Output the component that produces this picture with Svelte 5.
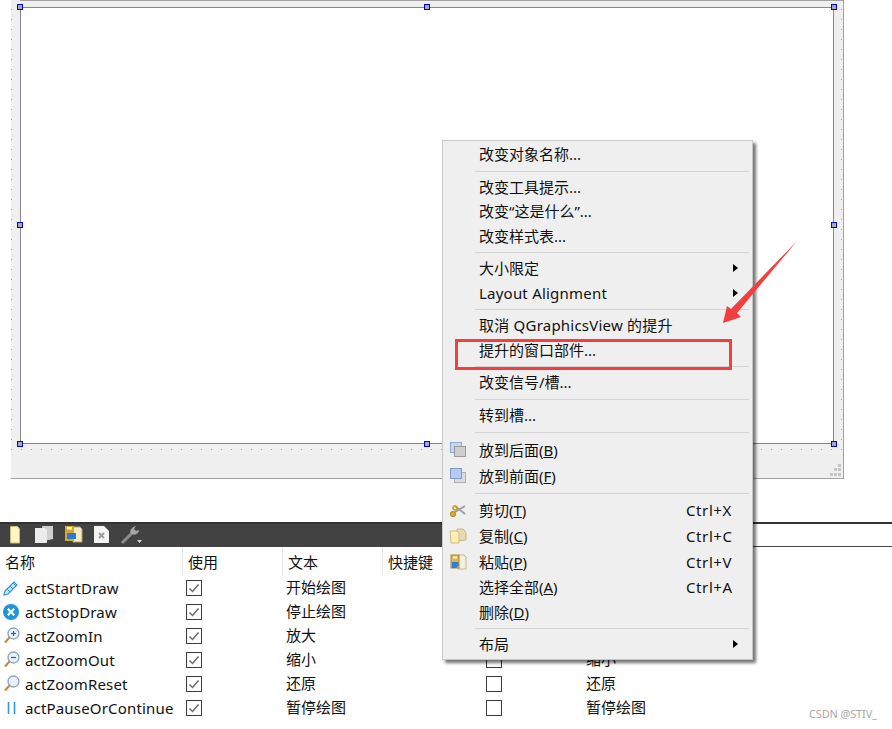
<script>
  // context menu rows: sep = divider, tall = row with an icon
  const menu = [
    { label: '改变对象名称...' },
    { sep: true },
    { label: '改变工具提示...' },
    { label: '改变“这是什么”...' },
    { label: '改变样式表...' },
    { sep: true },
    { label: '大小限定', sub: true },
    { label: 'Layout Alignment', sub: true, latin: true },
    { sep: true },
    { label: '取消 QGraphicsView 的提升', latin: true },
    { label: '提升的窗口部件...' },
    { sep: true },
    { label: '改变信号/槽...' },
    { sep: true },
    { label: '转到槽...' },
    { sep: true, wide: true },
    { label: '放到后面(', key: 'B', icon: 'back' },
    { label: '放到前面(', key: 'F', icon: 'front' },
    { sep: true },
    { label: '剪切(', key: 'T', icon: 'cut', shortcut: 'Ctrl+X' },
    { label: '复制(', key: 'C', icon: 'copy', shortcut: 'Ctrl+C' },
    { label: '粘贴(', key: 'P', icon: 'paste', shortcut: 'Ctrl+V' },
    { label: '选择全部(', key: 'A', shortcut: 'Ctrl+A' },
    { label: '删除(', key: 'D' },
    { sep: true },
    { label: '布局', sub: true }
  ];

  const actions = [
    { name: 'actStartDraw', text: '开始绘图', icon: 'pencil' },
    { name: 'actStopDraw', text: '停止绘图', icon: 'stop' },
    { name: 'actZoomIn', text: '放大', icon: 'zoomin' },
    { name: 'actZoomOut', text: '缩小', icon: 'zoomout' },
    { name: 'actZoomReset', text: '还原', icon: 'zoom' },
    { name: 'actPauseOrContinue', text: '暂停绘图', icon: 'pause' }
  ];

  const handles = [
    [20, 7], [427, 7], [834, 7],
    [20, 225], [834, 225],
    [20, 444], [427, 444], [834, 444]
  ];
</script>

{#snippet glyph(kind)}
  <svg class="glyph" viewBox="0 0 18 18" width="18" height="18" aria-hidden="true">
    {#if kind === 'pencil'}
      <path d="M3 12 12 3l3 3-9 9-4 1z" fill="#cfe6f8" stroke="#2f97dd" stroke-width="1.2" />
      <path d="M5 10l3 3M8 7l3 3M11 4l3 3" stroke="#2f97dd" />
    {:else if kind === 'stop'}
      <circle cx="9" cy="9" r="8" fill="#1f95dc" />
      <path d="M5.8 5.8l6.4 6.4M12.2 5.8l-6.4 6.4" stroke="#fff" stroke-width="2.2" />
    {:else if kind === 'zoomin' || kind === 'zoomout' || kind === 'zoom'}
      <circle cx="11.500" cy="6.500" r="5.500" fill="#e9f2fb" stroke="#8aa2bd" stroke-width="1.3" />
      <path d="M7.500 10.500l-4.500 5" stroke="#c88f3f" stroke-width="2.4" />
      {#if kind !== 'zoom'}
        <path d="M9 6.500h5" stroke="#2d5fa8" stroke-width="1.2" />
      {/if}
      {#if kind === 'zoomin'}
        <path d="M11.500 4v5" stroke="#2d5fa8" stroke-width="1.2" />
      {/if}
    {:else if kind === 'pause'}
      <path d="M6.500 3v12M12.500 3v12" stroke="#2f97dd" stroke-width="1.6" />
    {:else if kind === 'back'}
      <rect x="1.500" y="1.500" width="11" height="10" fill="#c4d6f2" stroke="#8fa8d0" />
      <rect x="5.500" y="5.500" width="11" height="10" fill="#cfcfcf" stroke="#9a9a9a" />
    {:else if kind === 'front'}
      <rect x="5.500" y="5.500" width="11" height="10" fill="#dcdcdc" stroke="#b0b0b0" />
      <rect x="1.500" y="1.500" width="11" height="10" fill="#b4cbf2" stroke="#7f9bc9" />
    {:else if kind === 'cut'}
      <path d="M6 11 16 5M6 5l10 8" stroke="#9c9c9c" stroke-width="1.8" />
      <circle cx="4" cy="13" r="2.4" fill="#d9b43c" stroke="#b8922a" stroke-width="1.4" />
      <circle cx="6" cy="7" r="2" fill="none" stroke="#c9a02c" stroke-width="1.6" />
    {:else if kind === 'copy'}
      <path d="M8 2h6l3 3v8l-9 1z" fill="#e6d9b0" stroke="#c4b68c" />
      <path d="M1 4h7l2 2v10H2z" fill="#fbf0b4" stroke="#d0bd82" />
    {:else if kind === 'paste'}
      <path d="M9 2h6l2 2v12H9z" fill="#f5f0de" stroke="#c4b68c" />
      <rect x="2" y="2" width="8" height="13" fill="#d9b84e" stroke="#a08a3c" />
      <rect x="4" y="3.500" width="4" height="2" fill="#fff6c8" />
      <path d="M3 9h6l1 3-3 3H3z" fill="#2f7fd6" />
    {/if}
  </svg>
{/snippet}

<div class="page">
  <section class="designer">
    <div class="canvas">
      <div class="widget"></div>
    </div>
    {#each handles as [x, y]}
      <span class="handle" style="left: {x - 11 - 3}px; top: {y - 3}px"></span>
    {/each}
    <svg class="grip" viewBox="0 0 14 14" width="14" height="14" aria-hidden="true">
      <path d="M9 0h3v3H9zM5 4h3v3H5zM9 4h3v3H9zM1 9h3v3H1zM5 9h3v3H5zM9 9h3v3H9z" fill="#c6c6c6" />
    </svg>
  </section>

  <div class="toolbar">
    <div class="tools">
      <svg viewBox="0 0 150 24" width="150" height="24" aria-hidden="true">
        <path d="M10.500 4.500h7l2 2.500v14h-9z" fill="#fdf6c0" stroke="#c9bc7c" />
        <path d="M42 4h11v13l-9 2z" fill="#cfcfcf" />
        <path d="M35 6h10l2 2v13H35z" fill="#ececec" />
        <path d="M73 5h7l2 2v13h-9z" fill="#f6eac4" stroke="#b8a460" />
        <rect x="65" y="4" width="9" height="15" fill="#d2a92f" />
        <rect x="67" y="11" width="9" height="6" fill="#2a78d8" />
        <rect x="67" y="5" width="5" height="2.500" fill="#fff2b8" />
        <path d="M94 4h10l5 5v12H94z" fill="#f4f4f4" />
        <path d="M99 11l5 5M104 11l-5 5" stroke="#9a9a9a" stroke-width="1.8" />
        <path d="M122 21 133 10" stroke="#8c8c8c" stroke-width="3" />
        <path d="M131 12c-2-4 1-7 5-8l-2 3 2 2 3-1c0 3-4 6-7 4z" fill="#a6a6a6" />
        <path d="M137 18h5l-2.500 3z" fill="#d8d8d8" />
      </svg>
    </div>
  </div>

  <section class="table">
    <div class="row head">
      <div class="cell name-head">名称</div>
      <div class="cell">使用</div>
      <div class="cell">文本</div>
      <div class="cell">快捷键</div>
    </div>
    {#each actions as act}
      <div class="row body">
        <div class="name">
          {@render glyph(act.icon)}
          <span>{act.name}</span>
        </div>
        <div class="check-cell">
          <span class="check">
            <svg viewBox="0 0 14 14" width="14" height="14" aria-hidden="true">
              <path d="M2.500 7.500 5.500 10.500 11.500 3.500" fill="none" stroke="#6a6a6a" stroke-width="1.500" />
            </svg>
          </span>
        </div>
        <div class="text-cell">{act.text}</div>
        <div class="text-cell"></div>
        <div class="check-cell"><span class="check"></span></div>
        <div class="text-cell">{act.text}</div>
      </div>
    {/each}
  </section>

  <nav class="menu">
    {#each menu as item}
      {#if item.sep}
        <div class="sep" class:wide={item.wide}></div>
      {:else}
        <div class="item" class:tall={item.icon}>
          <span class="icon">
            {#if item.icon}{@render glyph(item.icon)}{/if}
          </span>
          <span class="label" class:latin={item.latin}>{item.label}{#if item.key}<u>{item.key}</u>){/if}</span>
          {#if item.shortcut}<span class="shortcut">{item.shortcut}</span>{/if}
          {#if item.sub}<span class="sub"></span>{/if}
        </div>
      {/if}
    {/each}
  </nav>

  <div class="redbox"></div>
  <svg class="arrow" viewBox="0 0 892 729" width="892" height="729" aria-hidden="true">
    <path d="M723 323 727 306 731 309 797 241 737 313 741 317z" fill="#f43e3e" />
  </svg>
  <div class="mark">CSDN @STIV_</div>
</div>

<style>
  :global(body) {
    margin: 0;
    background: #fff;
  }

  .page {
    position: relative;
    width: 892px;
    height: 729px;
    overflow: hidden;
    font-family: "Noto Sans", "Noto Sans CJK SC", sans-serif;
    font-size: 15px;
    color: #111;
  }

  .designer {
    position: relative;
    box-sizing: border-box;
    width: 833px;
    height: 479px;
    margin-left: 11px;
    margin-bottom: 43px;
    background: #efefef;
    border-right: 1px solid #a2a2a2;
    border-bottom: 1px solid #a2a2a2;
  }

  .designer::before {
    content: "";
    position: absolute;
    left: 9px;
    right: 0;
    top: 0;
    height: 1px;
    background: #a2a2a2;
  }

  .canvas {
    box-sizing: border-box;
    height: 450px;
    padding: 7px 9px 0 9px;
    background-image: conic-gradient(at 1px 1px, transparent 75%, #a8a8a8 0);
    background-size: 10px 10px;
    background-position: 0 9px;
  }

  .widget {
    box-sizing: border-box;
    height: 437px;
    background: #fff;
    border: 1px solid #85858f;
  }

  .handle {
    position: absolute;
    box-sizing: border-box;
    width: 6px;
    height: 6px;
    background: #aaa;
    border: 1px solid #0000e0;
  }

  .grip {
    position: absolute;
    right: 0;
    bottom: 0;
  }

  .toolbar {
    box-sizing: border-box;
    height: 25px;
    border-top: 2px solid #333;
    border-bottom: 1px solid #444;
  }

  .tools {
    width: 470px;
    height: 22px;
    overflow: hidden;
    background: #424242;
  }

  .tools svg {
    display: block;
    margin-top: -2px;
  }

  .row {
    display: grid;
    grid-template-columns: 183px 100px 100px 100px 100px 1fr;
  }

  .head {
    height: 29px;
  }

  .cell {
    box-sizing: border-box;
    padding: 2px 0 0 5px;
    line-height: 26px;
    border-right: 1px solid #e6e6e6;
  }

  .body {
    height: 24px;
    line-height: 23px;
  }

  .name {
    display: flex;
    align-items: center;
    gap: 5px;
    padding-left: 2px;
    letter-spacing: 0.17px;
  }

  .glyph {
    flex: none;
    display: block;
  }

  .check-cell {
    display: flex;
    align-items: center;
    padding-left: 3px;
  }

  .check {
    box-sizing: border-box;
    display: block;
    width: 16px;
    height: 16px;
    border: 1px solid #3a3a3a;
  }

  .check svg {
    display: block;
    margin: 0;
  }

  .text-cell {
    padding-left: 3px;
  }

  .menu {
    position: absolute;
    left: 442px;
    top: 140px;
    box-sizing: border-box;
    width: 311px;
    height: 520px;
    padding-top: 1px;
    background: #efefef;
    border: 1px solid #c8c8c8;
    box-shadow: 3px 3px 3px rgba(0, 0, 0, 0.55);
  }

  .item {
    position: relative;
    display: flex;
    align-items: center;
    height: 24.5px;
    line-height: 24px;
  }

  .item.tall {
    height: 26px;
  }

  .icon {
    flex: none;
    display: flex;
    box-sizing: border-box;
    width: 36px;
    padding-left: 6px;
  }

  .label {
    flex: 1;
    white-space: nowrap;
  }

  .label.latin {
    letter-spacing: 0.22px;
  }

  .shortcut {
    position: absolute;
    left: 243px;
    letter-spacing: 0.6px;
  }

  .sub {
    position: absolute;
    left: 290px;
    top: 8px;
    border-left: 5px solid #000;
    border-top: 4px solid transparent;
    border-bottom: 4px solid transparent;
  }

  .sep {
    box-sizing: border-box;
    height: 8px;
    margin: 0 3px 0 32px;
    padding-top: 4px;
  }

  .sep.wide {
    height: 10px;
    padding-top: 5px;
  }

  .sep::after {
    content: "";
    display: block;
    height: 1px;
    background: #d4d4d4;
  }

  .redbox {
    position: absolute;
    left: 455px;
    top: 339px;
    box-sizing: border-box;
    width: 277px;
    height: 31px;
    border: 3px solid #f23f3f;
  }

  .arrow {
    position: absolute;
    left: 0;
    top: 0;
    pointer-events: none;
  }

  .mark {
    position: absolute;
    left: 809px;
    top: 706px;
    font-size: 11px;
    line-height: 15px;
    letter-spacing: -0.15px;
    color: #a8a8a8;
  }
</style>
